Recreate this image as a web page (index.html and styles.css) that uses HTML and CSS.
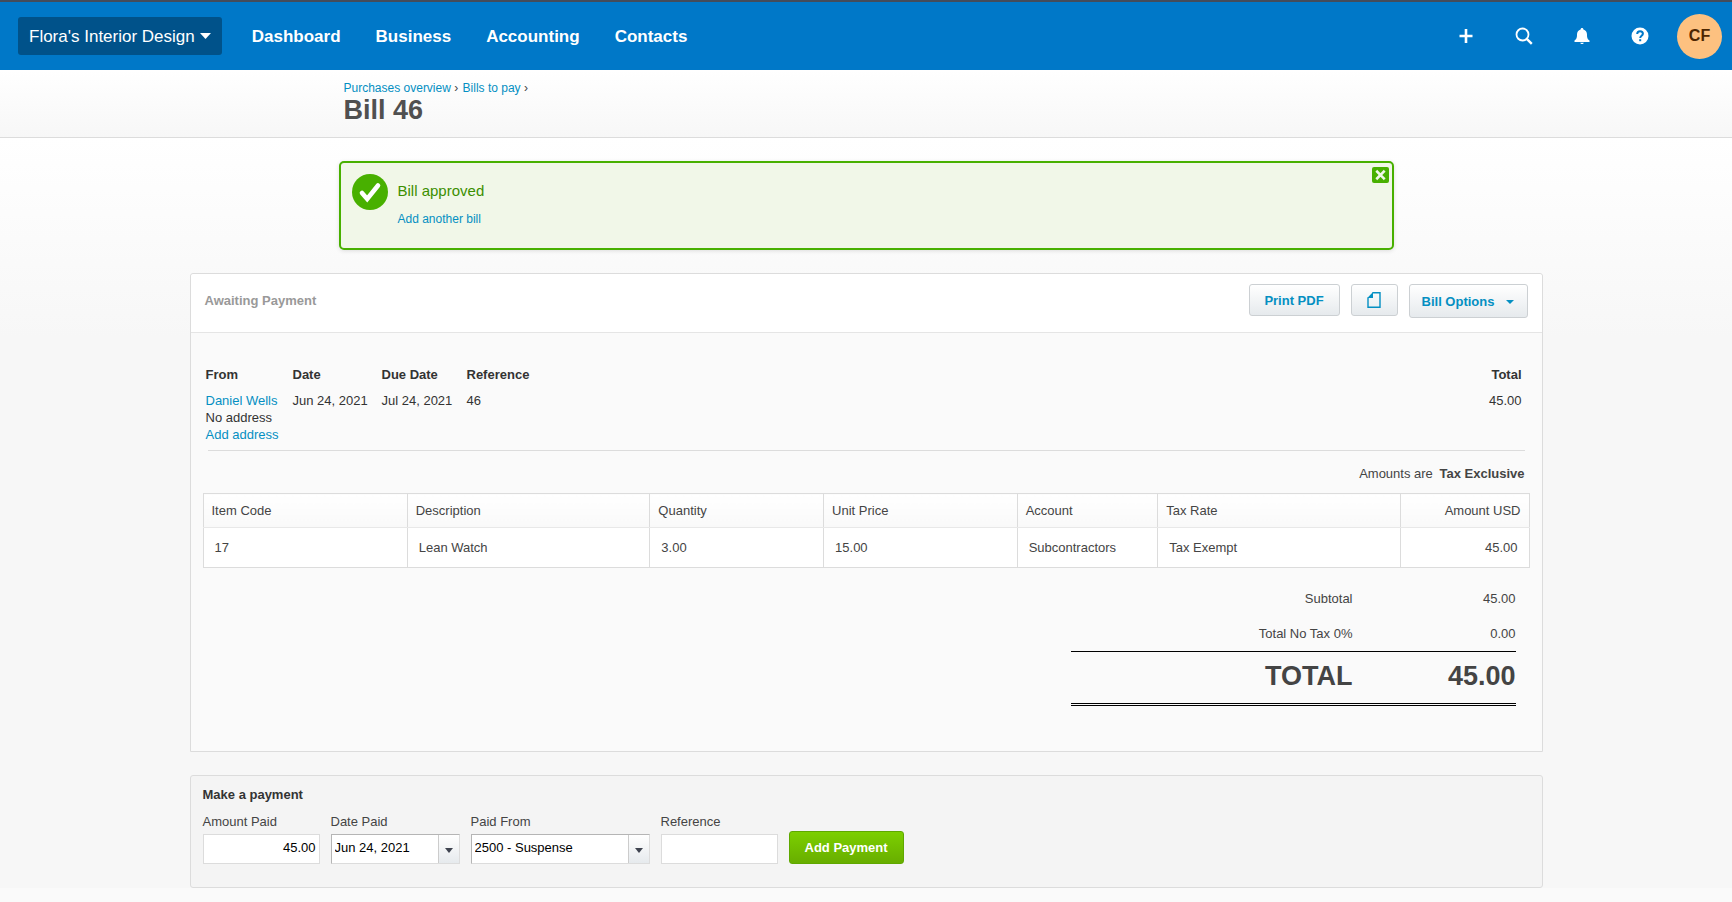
FILE: index.html
```html
<!DOCTYPE html>
<html lang="en">
<head>
<meta charset="utf-8">
<title>Bill 46</title>
<link rel="stylesheet" href="styles.css">
</head>
<body>
<header class="topbar">
  <button type="button" class="org">Flora's Interior Design
    <svg width="11" height="6" viewBox="0 0 11 6" aria-hidden="true"><path d="M0 0h11L5.500 6z" fill="#fff"/></svg>
  </button>
  <nav class="nav">
    <a href="#">Dashboard</a>
    <a href="#">Business</a>
    <a href="#">Accounting</a>
    <a href="#">Contacts</a>
  </nav>
  <div class="tools">
    <button type="button" class="tool" aria-label="Create new">
      <svg width="18" height="18" viewBox="0 0 18 18"><path d="M9 2v14M2.500 9h13" stroke="#fff" stroke-width="2.600" fill="none"/></svg>
    </button>
    <button type="button" class="tool" aria-label="Search">
      <svg width="18" height="18" viewBox="0 0 18 18"><circle cx="7.500" cy="7.500" r="6" stroke="#fff" stroke-width="1.800" fill="none"/><path d="M11.800 11.800l5 5" stroke="#fff" stroke-width="2.400"/></svg>
    </button>
    <button type="button" class="tool" aria-label="Notifications">
      <svg width="18" height="18" viewBox="0 0 18 18"><path d="M9 1c.9 0 1.400.6 1.400 1.500C12.600 3.200 14 5 14 7.400c0 3.600.6 4.600 2.500 6.100V15h-15v-1.500C3.400 12 4 11 4 7.400 4 5 5.400 3.200 7.600 2.500 7.600 1.600 8.100 1 9 1z" fill="#fff"/><path d="M7.200 15.700h3.600c-.2.900-.9 1.400-1.800 1.400s-1.600-.5-1.800-1.400z" fill="#fff"/></svg>
    </button>
    <button type="button" class="tool" aria-label="Help">
      <svg width="18" height="18" viewBox="0 0 18 18"><circle cx="9" cy="9" r="8.500" fill="#fff"/><path d="M6.200 7c0-1.700 1.200-2.800 2.900-2.800S11.900 5.200 11.900 6.700c0 2-2.700 2.100-2.700 4.200" stroke="#0078c8" stroke-width="2" fill="none"/><path d="M8.200 12.200h2v2h-2z" fill="#0078c8"/></svg>
    </button>
    <button type="button" class="avatar">CF</button>
  </div>
</header>

<div class="page-head">
  <div class="column page-head-inner">
    <nav class="crumbs" aria-label="Breadcrumb"><a href="#">Purchases overview</a> <span>›</span> <a href="#">Bills to pay</a> <span>›</span></nav>
    <h1>Bill 46</h1>
  </div>
</div>

<main>
  <section class="column alert">
    <svg class="alert-icon" width="36" height="36" viewBox="0 0 36 36" aria-hidden="true"><circle cx="18" cy="18" r="18" fill="#48b000"/><path d="M10 19l5.200 6L26 11.500" stroke="#fff" stroke-width="4.600" stroke-linecap="round" stroke-linejoin="miter" fill="none"/></svg>
    <div class="alert-text">
      <p>Bill approved</p>
      <a href="#">Add another bill</a>
    </div>
    <button type="button" class="close" aria-label="Close">
      <svg width="17" height="16" viewBox="0 0 17 16"><path d="M5.200 4.700l6.600 6.600M11.800 4.700l-6.600 6.600" stroke="#f1f7e9" stroke-width="2.600" fill="none" stroke-linecap="square"/></svg>
    </button>
  </section>

  <section class="panel bill">
    <div class="panel-head">
      <h2>Awaiting Payment</h2>
      <div class="actions">
        <button type="button" class="btn">Print PDF</button>
        <button type="button" class="btn btn-file" aria-label="Files">
          <svg width="14" height="16" viewBox="0 0 14 16"><path d="M5.500 .7H13v14.600H1V5.500" fill="none" stroke="#048fc2" stroke-width="1.400"/><path d="M6 0v6H.3z" fill="#048fc2"/></svg>
        </button>
        <button type="button" class="btn btn-options">Bill Options
          <svg width="8" height="6" viewBox="0 0 8 6" aria-hidden="true"><path d="M0 2h8L4 6z" fill="#048fc2"/></svg>
        </button>
      </div>
    </div>
    <div class="meta">
      <dl class="meta-from"><dt>From</dt><dd><a href="#">Daniel Wells</a></dd><dd>No address</dd><dd><a href="#">Add address</a></dd></dl>
      <dl class="meta-date"><dt>Date</dt><dd>Jun 24, 2021</dd></dl>
      <dl class="meta-due"><dt>Due Date</dt><dd>Jul 24, 2021</dd></dl>
      <dl><dt>Reference</dt><dd>46</dd></dl>
      <dl class="meta-total"><dt>Total</dt><dd>45.00</dd></dl>
    </div>
    <p class="tax-note">Amounts are <strong>Tax Exclusive</strong></p>
    <table class="items">
      <colgroup><col class="c-item"><col class="c-desc"><col class="c-qty"><col class="c-price"><col class="c-account"><col class="c-tax"><col class="c-amount"></colgroup>
      <thead>
        <tr><th>Item Code</th><th>Description</th><th>Quantity</th><th>Unit Price</th><th>Account</th><th>Tax Rate</th><th class="num">Amount USD</th></tr>
      </thead>
      <tbody>
        <tr><td>17</td><td>Lean Watch</td><td>3.00</td><td>15.00</td><td>Subcontractors</td><td>Tax Exempt</td><td class="num">45.00</td></tr>
      </tbody>
    </table>
    <table class="totals">
      <tbody>
        <tr><th>Subtotal</th><td>45.00</td></tr>
        <tr><th>Total No Tax 0%</th><td>0.00</td></tr>
        <tr class="grand"><th>TOTAL</th><td>45.00</td></tr>
      </tbody>
    </table>
  </section>

  <form class="panel payment">
    <h2>Make a payment</h2>
    <div class="fields">
      <div class="field">
        <label for="amount">Amount Paid</label>
        <input id="amount" class="box amount" type="text" value="45.00">
      </div>
      <div class="field">
        <label for="date">Date Paid</label>
        <div class="combo combo-date">
          <input id="date" type="text" value="Jun 24, 2021">
          <button type="button" class="arrow" aria-label="Choose date"><svg width="8" height="5" viewBox="0 0 8 5"><path d="M0 0h8L4 5z" fill="#3f4450"/></svg></button>
        </div>
      </div>
      <div class="field">
        <label for="from">Paid From</label>
        <div class="combo combo-from">
          <select id="from"><option>2500 - Suspense</option></select>
          <span class="arrow" aria-hidden="true"><svg width="8" height="5" viewBox="0 0 8 5"><path d="M0 0h8L4 5z" fill="#3f4450"/></svg></span>
        </div>
      </div>
      <div class="field">
        <label for="ref">Reference</label>
        <input id="ref" class="box" type="text">
      </div>
      <button type="submit" class="pay">Add Payment</button>
    </div>
  </form>
</main>
</body>
</html>
```

FILE: styles.css
```css
* { box-sizing: border-box; }
body {
  margin: 0;
  min-height: 100vh;
  font: 13px/17px "Liberation Sans", Arial, sans-serif;
  color: #444;
  background: #fafafa;
}
h1, h2, p, dl, dd { margin: 0; }
button, input, select { font: inherit; }
button { cursor: pointer; }
a { color: #048fc2; text-decoration: none; }

.topbar {
  display: flex;
  align-items: center;
  height: 70px;
  padding: 0 10px 0 18px;
  border-top: 2px solid #444c5a;
  background: #0078c8;
}
.org {
  display: flex;
  align-items: center;
  gap: 5px;
  height: 38px;
  padding: 0 11px;
  border: 0;
  border-radius: 3px;
  background: #00528a;
  color: #fff;
  font-size: 17px;
}
.nav { display: flex; gap: 35px; margin-left: 30px; }
.nav a { color: #fff; font-size: 17px; font-weight: bold; }
.tools { display: flex; align-items: center; margin-left: auto; }
.tool {
  display: flex;
  justify-content: center;
  width: 58px;
  padding: 8px 0;
  border: 0;
  background: none;
}
.avatar {
  width: 45px;
  height: 45px;
  margin-left: 8px;
  padding: 0 0 2px;
  border: 0;
  border-radius: 50%;
  background: #fdc180;
  color: #4d2600;
  font-size: 16px;
  font-weight: bold;
}

.column { max-width: 1055px; margin: 0 auto; }
.page-head {
  height: 68px;
  border-bottom: 1px solid #dcdcdc;
  background: linear-gradient(#fff, #f7f7f7);
}
.page-head-inner { padding: 10px 5px 0; }
.crumbs { font-size: 12px; line-height: 16px; }
.crumbs span { margin-right: 1px; }
h1 { font-size: 27px; line-height: 28px; color: #505050; }

main {
  padding: 23px 20px 0;
  background: linear-gradient(#fff, #f7f7f7 200px);
}
.alert {
  display: flex;
  align-items: flex-start;
  min-height: 89px;
  padding: 11px 3px 11px 11px;
  border: 2px solid #48b000;
  border-radius: 5px;
  background: #f1f7e8;
  box-shadow: 0 1px 4px rgba(0, 0, 0, .12);
}
.alert-text { flex: 1; padding: 8px 10px 0; font-size: 12px; }
.alert-text p { margin-bottom: 12px; color: #3c8f00; font-size: 15px; }
.close {
  display: flex;
  margin-top: -7px;
  padding: 0;
  border: 0;
  border-radius: 2px;
  background: #48b000;
}

.panel {
  max-width: 1353px;
  margin: 23px auto 0;
  border: 1px solid #dcdcdc;
  border-radius: 3px;
}
.bill { padding-bottom: 45px; border-radius: 3px 3px 0 0; background: #fafafa; }
.panel-head {
  display: flex;
  justify-content: space-between;
  align-items: flex-start;
  padding: 10px 14px 14px;
  border-bottom: 1px solid #e5e5e5;
  border-radius: 3px 3px 0 0;
  background: #fff;
}
h2 { font-size: 13px; line-height: 17px; }
.panel-head h2 { padding-top: 8px; color: #999; }
.actions { display: flex; align-items: flex-start; gap: 11px; }
.btn {
  display: flex;
  align-items: center;
  justify-content: center;
  gap: 12px;
  min-width: 91px;
  height: 32px;
  padding: 0 10px;
  border: 1px solid #ccd0d3;
  border-radius: 3px;
  background: linear-gradient(#fff, #e6eaed);
  color: #048fc2;
  font-weight: bold;
}
.btn-file { min-width: 47px; }
.btn-options { min-width: 119px; height: 34px; }

.meta {
  display: flex;
  margin: 0 17px;
  padding: 33px 3px 7px 0;
  border-bottom: 1px solid #dcdcdc;
}
.meta dt { margin-bottom: 9px; font-weight: bold; color: #333; }
.meta dd { color: #333; }
.meta-from { width: 87px; margin-left: -2px; }
.meta-date { width: 89px; }
.meta-due { width: 85px; }
.meta-total { margin-left: auto; text-align: right; }
.tax-note { padding: 14px 17px 11px; text-align: right; }
.tax-note strong { margin-left: 3px; }

.items {
  width: calc(100% - 24px);
  margin: 0 12px;
  border-collapse: collapse;
  table-layout: fixed;
  background: #fff;
}
.items th, .items td { border: 1px solid #dcdcdc; text-align: left; font-weight: normal; }
.items th { height: 34px; padding: 0 8px; background: linear-gradient(#fff, #f9f9f9); border-bottom-color: #e8e8e8; }
.items td { height: 40px; padding: 0 11px; }
.items .num { text-align: right; }
.c-item { width: 15.400%; }
.c-desc { width: 18.300%; }
.c-qty { width: 13.100%; }
.c-price { width: 14.600%; }
.c-account { width: 10.600%; }
.c-tax { width: 18.300%; }
.c-amount { width: 9.700%; }

.totals {
  width: 445px;
  margin: 13px 26px 0 auto;
  border-collapse: collapse;
}
.totals th, .totals td { height: 35px; padding: 0; font-weight: normal; text-align: right; }
.totals td { width: 163px; }
.totals .grand th, .totals .grand td {
  height: 53px;
  padding-bottom: 2px;
  border-top: 1px solid #000;
  border-bottom: 3px double #000;
  font-size: 27px;
  line-height: 30px;
  font-weight: bold;
}

.payment { padding: 10px 12px 23px; background: #f4f4f4; }
.payment h2 { color: #333; }
.fields { display: flex; flex-wrap: wrap; align-items: flex-end; gap: 11px; padding-top: 10px; }
.field { display: flex; flex-direction: column; gap: 4px; }
.box {
  width: 117px;
  height: 30px;
  padding: 0 3px 2px;
  border: 1px solid #dcdcdc;
  background: #fff;
  color: #000;
}
.amount { text-align: right; }
.combo {
  display: flex;
  height: 30px;
  border: 1px solid;
  border-color: #b5b5b5 #dcdcdc #dcdcdc #b5b5b5;
  background: #fff;
}
.combo-date { width: 129px; }
.combo-from { width: 179px; }
.combo input, .combo select {
  flex: 1;
  min-width: 0;
  padding: 0 3px 2px;
  border: 0;
  background: none;
  color: #000;
  appearance: none;
}
.arrow {
  display: flex;
  align-items: center;
  justify-content: center;
  width: 21px;
  padding: 3px 0 0;
  border: 0;
  border-left: 1px solid #ccc;
  background: linear-gradient(#fff, #e6eaed);
}
.pay {
  height: 33px;
  padding: 0 15px;
  border: 1px solid #5fa800;
  border-radius: 3px;
  background: linear-gradient(#7ccf00, #68ae00);
  color: #fff;
  font-weight: bold;
}
```
